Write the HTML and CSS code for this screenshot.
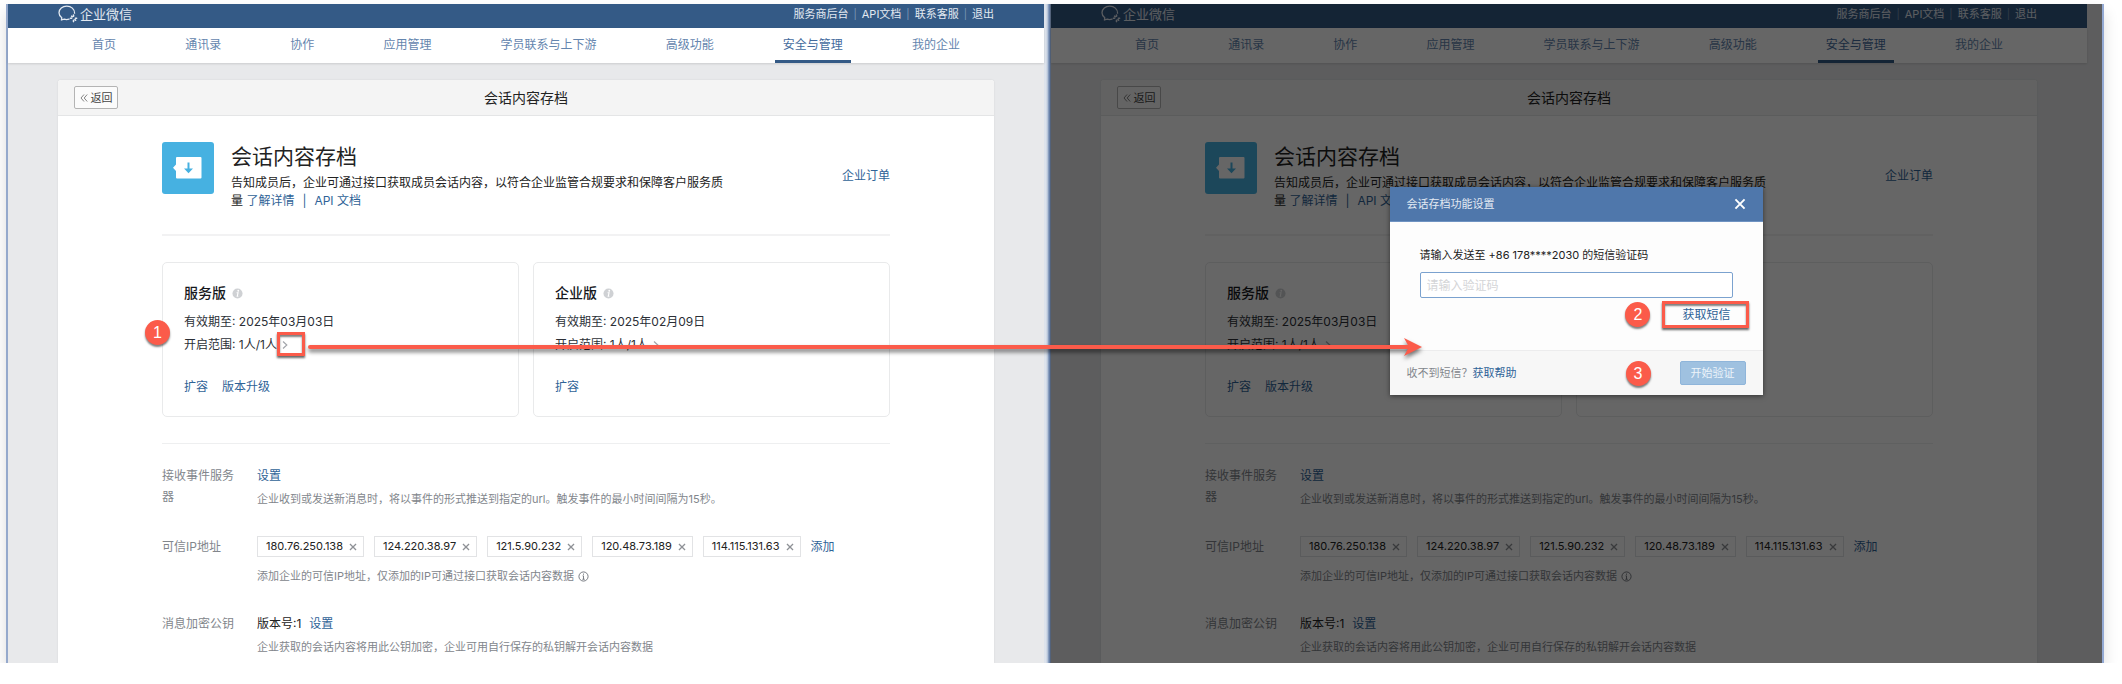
FILE: index.html
```html
<!DOCTYPE html>
<html lang="zh-CN">
<head>
<meta charset="utf-8">
<title>会话内容存档 - 企业微信</title>
<link rel="stylesheet" href="styles.css">
</head>
<body>
<svg class="defs" aria-hidden="true">
  <symbol id="logo" viewBox="0 0 20 18">
    <path d="M11 14.200 Q8.500 15 6.200 14.200 L3.400 15 L3.800 12.800 Q1 10.800 1 7.800 C1 4 4.400 1.200 8.800 1.200 S16.600 4 16.600 8.200" fill="none" stroke="currentColor" stroke-width="1.300" stroke-linecap="round" stroke-linejoin="round"/>
    <path d="M15.500 10v1.200M15.500 15.400v1.200M12.400 13.200h1.200M17.400 13.200h1.200M13.600 11.200l.6.600M17 14.600l.6.600" stroke="currentColor" stroke-width="1.600" stroke-linecap="round"/>
  </symbol>
  <symbol id="archive" viewBox="0 0 52 52">
    <path d="M15 15h23.500a1 1 0 0 1 1 1v19.500a1 1 0 0 1-1 1H15a1 1 0 0 1-1-1v-6.500L11 25.800 14 22.600V16a1 1 0 0 1 1-1z" fill="#fff"/>
    <path d="M26.500 20.500v7" stroke="#46b1e1" stroke-width="2"/>
    <path d="M22 26.500h9l-4.500 4.800z" fill="#46b1e1"/>
  </symbol>
  <symbol id="info-solid" viewBox="0 0 12 12">
    <circle cx="6" cy="6" r="5.500" fill="#cfd1d4"/>
    <circle cx="6.800" cy="3" r="1" fill="#fff"/>
    <path d="M5 5.200h1.600L5.700 9h1.200" fill="none" stroke="#fff" stroke-width="1.200"/>
  </symbol>
  <symbol id="info-line" viewBox="0 0 12 12">
    <circle cx="6" cy="6" r="5" fill="none" stroke="#6d7279"/>
    <path d="M6 2.800v1.300M5 5.300h1V9M4.800 9h2.500" fill="none" stroke="#6d7279"/>
  </symbol>
  <symbol id="cross" viewBox="0 0 10 10">
    <path d="M1.200 1.200l7.600 7.600M8.800 1.200L1.200 8.800" fill="none" stroke="currentColor" stroke-width="1.600"/>
  </symbol>
  <symbol id="chevron" viewBox="0 0 6 10">
    <path d="M1 1.500L4.800 5 1 8.500" fill="none" stroke="#a3a6ab" stroke-width="1.200"/>
  </symbol>
  <symbol id="back" viewBox="0 0 8 8">
    <path d="M4 .5L1 4l3 3.500M7.200 .5l-3 3.500 3 3.500" fill="none" stroke="#777" stroke-width=".9"/>
  </symbol>
</svg>

<main class="board">
  <section class="window window-left">
    <header class="topbar">
      <a class="brand" href="#"><svg class="logo"><use href="#logo"/></svg>企业微信</a>
      <div class="account"><a href="#">服务商后台</a><i>|</i><a href="#">API文档</a><i>|</i><a href="#">联系客服</a><i>|</i><a href="#">退出</a></div>
    </header>
    <nav class="nav">
      <a href="#">首页</a><a href="#">通讯录</a><a href="#">协作</a><a href="#">应用管理</a><a href="#">学员联系与上下游</a><a href="#">高级功能</a><a class="active" href="#">安全与管理</a><a href="#">我的企业</a>
    </nav>
    <article class="panel">
      <div class="panel-head">
        <button class="back" type="button"><svg><use href="#back"/></svg>返回</button>
        <h1>会话内容存档</h1>
      </div>
      <div class="panel-body">
        <div class="hero">
          <svg class="app-icon"><use href="#archive"/></svg>
          <div class="intro">
            <h2>会话内容存档</h2>
            <p>告知成员后，企业可通过接口获取成员会话内容，以符合企业监管合规要求和保障客户服务质量 <a href="#">了解详情</a><span class="bar">|</span><a href="#">API 文档</a></p>
          </div>
          <a class="orders" href="#">企业订单</a>
        </div>
        <div class="plans">
          <div class="plan">
            <h3>服务版<svg class="info"><use href="#info-solid"/></svg></h3>
            <p>有效期至: 2025年03月03日</p>
            <p>开启范围: 1人/1人<a class="more" href="#" aria-label="查看范围"><svg><use href="#chevron"/></svg></a></p>
            <div class="actions"><a href="#">扩容</a><a href="#">版本升级</a></div>
            <span class="step step-one">1</span>
            <span class="frame frame-range"></span>
          </div>
          <div class="plan">
            <h3>企业版<svg class="info"><use href="#info-solid"/></svg></h3>
            <p>有效期至: 2025年02月09日</p>
            <p>开启范围: 1人/1人<a class="more" href="#" aria-label="查看范围"><svg><use href="#chevron"/></svg></a></p>
            <div class="actions"><a href="#">扩容</a></div>
          </div>
        </div>
        <dl class="settings">
          <dt>接收事件服务器</dt>
          <dd>
            <div class="line"><a href="#">设置</a></div>
            <p class="hint">企业收到或发送新消息时，将以事件的形式推送到指定的url。触发事件的最小时间间隔为15秒。</p>
          </dd>
          <dt>可信IP地址</dt>
          <dd>
            <div class="chips">
              <span class="chip">180.76.250.138<button type="button" aria-label="移除"><svg><use href="#cross"/></svg></button></span>
              <span class="chip">124.220.38.97<button type="button" aria-label="移除"><svg><use href="#cross"/></svg></button></span>
              <span class="chip">121.5.90.232<button type="button" aria-label="移除"><svg><use href="#cross"/></svg></button></span>
              <span class="chip">120.48.73.189<button type="button" aria-label="移除"><svg><use href="#cross"/></svg></button></span>
              <span class="chip">114.115.131.63<button type="button" aria-label="移除"><svg><use href="#cross"/></svg></button></span>
              <a href="#">添加</a>
            </div>
            <p class="hint hint-low">添加企业的可信IP地址，仅添加的IP可通过接口获取会话内容数据<svg class="info"><use href="#info-line"/></svg></p>
          </dd>
          <dt>消息加密公钥</dt>
          <dd>
            <div class="line"><span class="version">版本号:1</span><a href="#">设置</a></div>
            <p class="hint">企业获取的会话内容将用此公钥加密，企业可用自行保存的私钥解开会话内容数据</p>
          </dd>
        </dl>
      </div>
    </article>
  </section>

  <section class="window window-right">
    <header class="topbar">
      <a class="brand" href="#"><svg class="logo"><use href="#logo"/></svg>企业微信</a>
      <div class="account"><a href="#">服务商后台</a><i>|</i><a href="#">API文档</a><i>|</i><a href="#">联系客服</a><i>|</i><a href="#">退出</a></div>
    </header>
    <nav class="nav">
      <a href="#">首页</a><a href="#">通讯录</a><a href="#">协作</a><a href="#">应用管理</a><a href="#">学员联系与上下游</a><a href="#">高级功能</a><a class="active" href="#">安全与管理</a><a href="#">我的企业</a>
    </nav>
    <article class="panel">
      <div class="panel-head">
        <button class="back" type="button"><svg><use href="#back"/></svg>返回</button>
        <h1>会话内容存档</h1>
      </div>
      <div class="panel-body">
        <div class="hero">
          <svg class="app-icon"><use href="#archive"/></svg>
          <div class="intro">
            <h2>会话内容存档</h2>
            <p>告知成员后，企业可通过接口获取成员会话内容，以符合企业监管合规要求和保障客户服务质量 <a href="#">了解详情</a><span class="bar">|</span><a href="#">API 文档</a></p>
          </div>
          <a class="orders" href="#">企业订单</a>
        </div>
        <div class="plans">
          <div class="plan">
            <h3>服务版<svg class="info"><use href="#info-solid"/></svg></h3>
            <p>有效期至: 2025年03月03日</p>
            <p>开启范围: 1人/1人<a class="more" href="#" aria-label="查看范围"><svg><use href="#chevron"/></svg></a></p>
            <div class="actions"><a href="#">扩容</a><a href="#">版本升级</a></div>
          </div>
          <div class="plan"></div>
        </div>
        <dl class="settings">
          <dt>接收事件服务器</dt>
          <dd>
            <div class="line"><a href="#">设置</a></div>
            <p class="hint">企业收到或发送新消息时，将以事件的形式推送到指定的url。触发事件的最小时间间隔为15秒。</p>
          </dd>
          <dt>可信IP地址</dt>
          <dd>
            <div class="chips">
              <span class="chip">180.76.250.138<button type="button" aria-label="移除"><svg><use href="#cross"/></svg></button></span>
              <span class="chip">124.220.38.97<button type="button" aria-label="移除"><svg><use href="#cross"/></svg></button></span>
              <span class="chip">121.5.90.232<button type="button" aria-label="移除"><svg><use href="#cross"/></svg></button></span>
              <span class="chip">120.48.73.189<button type="button" aria-label="移除"><svg><use href="#cross"/></svg></button></span>
              <span class="chip">114.115.131.63<button type="button" aria-label="移除"><svg><use href="#cross"/></svg></button></span>
              <a href="#">添加</a>
            </div>
            <p class="hint hint-low">添加企业的可信IP地址，仅添加的IP可通过接口获取会话内容数据<svg class="info"><use href="#info-line"/></svg></p>
          </dd>
          <dt>消息加密公钥</dt>
          <dd>
            <div class="line"><span class="version">版本号:1</span><a href="#">设置</a></div>
            <p class="hint">企业获取的会话内容将用此公钥加密，企业可用自行保存的私钥解开会话内容数据</p>
          </dd>
        </dl>
      </div>
    </article>
    <div class="mask">
      <form class="dialog" role="dialog" aria-labelledby="dialog-title">
        <header class="dialog-head">
          <h2 id="dialog-title">会话存档功能设置</h2>
          <button type="button" aria-label="关闭"><svg><use href="#cross"/></svg></button>
        </header>
        <div class="dialog-body">
          <label for="code">请输入发送至 +86 178****2030 的短信验证码</label>
          <input id="code" type="text" placeholder="请输入验证码">
          <div class="send">
            <span class="step">2</span>
            <a class="frame" href="#">获取短信</a>
          </div>
        </div>
        <footer class="dialog-foot">
          <span class="help">收不到短信？<a href="#">获取帮助</a></span>
          <span class="step">3</span>
          <button type="submit">开始验证</button>
        </footer>
      </form>
    </div>
  </section>
  <div class="arrow"><span class="shaft"></span><svg viewBox="0 0 18 18"><path d="M0 0L18 9 0 18 5 9z" fill="#fb5b4a"/></svg></div>
</main>
</body>
</html>
```
FILE: styles.css
```css
* { box-sizing: border-box; }
body, h1, h2, h3, p, dl, dd { margin: 0; }
body {
  background: #fff;
  color: #2b2f36;
  font: 12px/18px Inter, "Noto Sans CJK SC", sans-serif;
}
a { color: #2f6397; text-decoration: none; }
button { padding: 0; border: 0; background: none; font: inherit; cursor: pointer; }
svg { display: block; flex: none; }
.defs { position: absolute; width: 0; height: 0; }

/* Board with the two windows */
.board {
  position: relative;
  display: flex;
  margin: 4px 18px 0 6px;
  box-shadow: 0 8px 14px rgba(0, 0, 0, .14);
}
.window { position: relative; flex: 1 1 0; min-width: 0; background: #e8e9eb; }
.window-left {
  padding-right: 6px;
  border-left: 2px solid #95a9cc;
  background: linear-gradient(to left, #6780a8 1px, #a9bad3 2px, #dde3ec 4px, #dde3ec 6px, #e8e9eb 6px);
}
.window-right { padding-right: 15px; border-left: 1px solid #53627a; border-right: 2px solid #93a9d3; }

.topbar {
  display: flex;
  align-items: flex-start;
  justify-content: space-between;
  height: 24px;
  padding: 0 50px;
  background: #345a86;
  font-size: 11px;
}
.topbar a { color: #e3e9f1; }
.brand { display: flex; align-items: center; gap: 2px; height: 20px; font-size: 13px; }
.logo { width: 20px; height: 18px; }
.account { display: flex; gap: 5px; height: 20px; align-items: center; }
.account i { color: #7d97b7; font-style: normal; font-size: 10px; }

.nav {
  display: flex;
  justify-content: space-between;
  padding: 0 76px;
  background: #fff;
  box-shadow: 0 1px 2px rgba(0, 0, 0, .12);
}
.nav a { padding: 8px 8px 6px; border-bottom: 3px solid transparent; color: #6485ae; }
.nav .active { border-bottom-color: #345a86; color: #446b9d; }

.panel { margin: 17px 50px 0; border-radius: 3px 3px 0 0; background: #fff; box-shadow: 0 0 2px rgba(0, 0, 0, .1); }
.panel-head {
  display: grid;
  grid-template-columns: 1fr auto 1fr;
  align-items: center;
  height: 36px;
  padding: 0 16px;
  border-bottom: 1px solid #e4e5e6;
  border-radius: 3px 3px 0 0;
  background: #f4f4f4;
}
.panel-head h1 { font-size: 14px; font-weight: 400; color: #222; }
.back {
  display: flex;
  align-items: center;
  justify-content: center;
  gap: 3px;
  width: 44px;
  height: 23px;
  border: 1px solid #b4b4b4;
  border-radius: 2px;
  background: #fbfbfb;
  color: #444;
  font-size: 11px;
}
.back svg { width: 8px; height: 8px; }
.panel-body { padding: 26px 104px 7px; }

.hero {
  display: flex;
  align-items: center;
  padding-bottom: 24px;
  border-bottom: 2px solid #f2f2f3;
}
.app-icon { align-self: flex-start; width: 52px; height: 52px; border-radius: 3px; background: #46b1e1; }
.intro { width: 500px; margin: 1px 0 0 17px; color: #222; }
.intro h2 { margin-bottom: 3px; font-size: 21px; font-weight: 400; line-height: 28px; }
.bar { margin: 0 8px; color: #2f6397; }
.orders { margin-left: auto; }

.plans {
  display: grid;
  grid-template-columns: 1fr 1fr;
  gap: 14px;
  padding: 26px 0;
  border-bottom: 1px solid #eeeff0;
}
.plan {
  position: relative;
  padding: 19px 21px;
  border: 1px solid #e9eaeb;
  border-radius: 5px;
  line-height: 23px;
}
.plan h3 { display: flex; align-items: center; gap: 6px; margin-bottom: 6px; font-size: 14px; font-weight: 500; line-height: 22px; color: #16181c; }
.plan p { display: flex; align-items: center; white-space: pre; }
.info { width: 11px; height: 11px; }
.more { margin-left: 5px; }
.more svg { width: 6px; height: 10px; }
.actions { display: flex; gap: 14px; margin-top: 21px; line-height: 20px; }

.settings { display: grid; grid-template-columns: 80px 1fr; gap: 28px 15px; padding-top: 21px; line-height: 21px; }
.settings dt { color: #82868c; }
.line { display: flex; gap: 8px; }
.version { color: #222; }
.hint { display: flex; align-items: center; gap: 4px; margin-top: 4px; color: #82868c; font-size: 11px; line-height: 18px; }
.hint-low { margin-top: 10px; }
.chips { display: flex; gap: 10px; }
.chip {
  display: flex;
  align-items: center;
  gap: 6px;
  height: 21px;
  padding: 0 6px 0 8px;
  border: 1px solid #e2e3e5;
  color: #222;
  font-size: 11px;
}
.chip button { color: #8e9196; }
.chip svg { width: 8px; height: 8px; }

/* Dialog over the right window */
.mask {
  position: absolute;
  inset: 0;
  display: flex;
  align-items: flex-start;
  justify-content: center;
  padding: 183px 1px 0 0;
  background: rgba(0, 0, 0, .6);
}
.dialog { width: 373px; background: #fdfdfd; box-shadow: 0 1px 5px rgba(0, 0, 0, .5); font-size: 11px; }
.dialog-head {
  display: flex;
  align-items: center;
  justify-content: space-between;
  height: 35px;
  padding: 0 17px;
  border-bottom: 1px solid #6f93c2;
  background: #4f77ab;
  color: #e3eaf3;
}
.dialog-head h2 { font-size: 11px; font-weight: 400; }
.dialog-head button { color: #fff; }
.dialog-head svg { width: 12px; height: 12px; }
.dialog-body { padding: 24px 30px 22px; color: #222; }
.dialog-body label { display: block; }
.dialog-body input {
  display: block;
  width: 100%;
  height: 26px;
  margin: 8px 0 3px;
  padding: 0 6px;
  border: 1px solid #7ba2cf;
  border-radius: 2px;
  outline: 0;
  background: #fff;
  font: inherit;
  font-size: 12px;
}
.dialog-body input::placeholder { color: #d4d5d7; opacity: 1; }
.send { display: flex; align-items: center; justify-content: flex-end; gap: 12px; margin-right: -16px; }
.send .frame { padding: 0 15px 0 17px; font-size: 12px; line-height: 21px; }
.dialog-foot {
  display: flex;
  align-items: center;
  height: 45px;
  padding: 0 17px;
  border-top: 1px solid #ececed;
  background: #f7f7f7;
}
.help { margin-right: auto; color: #82868c; }
.dialog-foot .step { margin-right: 29px; }
.dialog-foot button {
  width: 66px;
  height: 24px;
  border: 1px solid #8fb5da;
  border-radius: 2px;
  background: #9fc1e0;
  color: #edf4fa;
}

/* Step markers, highlight frames and the arrow */
.step {
  display: block;
  width: 25px;
  height: 25px;
  border-radius: 50%;
  background: #fb5b4a;
  box-shadow: 0 2px 2px rgba(0, 0, 0, .5);
  color: #fff;
  font: 16px/25px "Liberation Sans", Arial, sans-serif;
  text-align: center;
}
.step-one { position: absolute; left: -18px; top: 57px; }
.frame {
  border: 3px solid #fb5b4a;
  box-shadow: 0 2px 2px rgba(0, 0, 0, .6), inset 0 2px 2px rgba(0, 0, 0, .5);
}
.frame-range { position: absolute; left: 114px; top: 69px; width: 28px; height: 24px; }
.arrow {
  position: absolute;
  left: 302px;
  right: 682px;
  top: 334px;
  display: flex;
  align-items: center;
  filter: drop-shadow(0 3px 2px rgba(0, 0, 0, .55));
}
.shaft { flex: 1; height: 4px; margin-right: -6px; border-radius: 2px; background: #fb5b4a; }
.arrow svg { width: 18px; height: 18px; }
```
